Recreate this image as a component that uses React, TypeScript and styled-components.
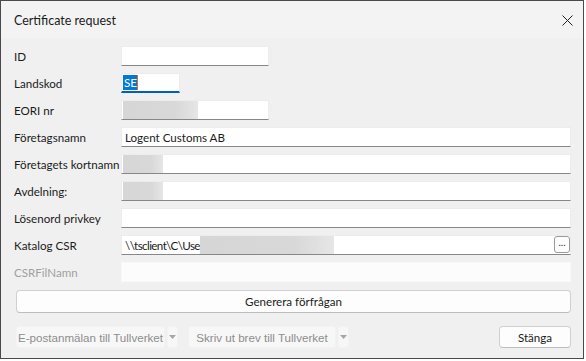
import styled, { createGlobalStyle } from 'styled-components';

const GlobalStyle = createGlobalStyle`
  html, body {
    margin: 0;
    padding: 0;
    background: #ffffff;
  }
  body {
    font-family: Lato, "Liberation Sans", sans-serif;
  }
`;

const Window = styled.div`
  box-sizing: border-box;
  width: 584px;
  height: 359px;
  border: 1px solid #4a4a4a;
  background: #f0f0f0;
  display: flex;
  flex-direction: column;
`;

const TitleBar = styled.div`
  height: 35px;
  background: #f3f3f3;
  display: flex;
  align-items: center;
  justify-content: space-between;
  padding: 2px 10px 0 13px;
  font-size: 12.5px;
  color: #1b1b1b;
`;

const CloseIcon = () => (
  <svg width="11" height="11" viewBox="0 0 11 11">
    <path d="M0.5 0.5 L10.5 10.5 M10.5 0.5 L0.5 10.5" stroke="#222" strokeWidth="1" fill="none" />
  </svg>
);

const Form = styled.div`
  display: grid;
  grid-template-columns: 107px 1fr;
  row-gap: 7px;
  padding: 8px 12px 0 13px;
  align-items: center;
`;

const Label = styled.div<{ $disabled?: boolean }>`
  font-size: 11.6px;
  color: ${(p) => (p.$disabled ? '#a0a0a0' : '#1b1b1b')};
  white-space: nowrap;
  padding-top: 1px;
`;

const Field = styled.div<{ $width?: number; $focused?: boolean; $disabled?: boolean }>`
  position: relative;
  box-sizing: border-box;
  height: 20px;
  width: ${(p) => (p.$width ? `${p.$width}px` : '100%')};
  background: ${(p) => (p.$disabled ? '#fcfcfc' : '#ffffff')};
  border: 1px solid ${(p) => (p.$disabled ? '#f8f8f8' : '#ececec')};
  border-bottom: ${(p) =>
    p.$focused ? '2px solid #005fb8' : p.$disabled ? '1px solid #f8f8f8' : '1px solid #878787'};
  display: flex;
  align-items: center;
  padding-left: 1px;
  font-size: 11.6px;
  color: #1b1b1b;
  overflow: hidden;
  white-space: nowrap;
`;

const Value = styled.span<{ $tight?: boolean }>`
  padding-left: 2px;
  letter-spacing: ${(p) => (p.$tight ? '-0.6px' : '0')};
`;

const Selected = styled.span`
  background: #0078d7;
  color: #ffffff;
  line-height: 15px;
  padding: 0 0 0 1px;
`;

const Caret = styled.span`
  display: inline-block;
  width: 1px;
  height: 15px;
  background: #e07020;
`;

const Blur = styled.div<{ $width: number }>`
  width: ${(p) => p.$width}px;
  height: 18px;
  background: linear-gradient(90deg, #d6d6d6 0%, #d8d8d8 70%, #e6e6e6 100%);
  flex-shrink: 0;
`;

const Ellipsis = styled.div`
  position: absolute;
  right: 0;
  top: 0;
  box-sizing: border-box;
  width: 16px;
  height: 17px;
  border: 1px solid #9a9a9a;
  border-radius: 3px;
  background: #fdfdfd;
  font-size: 10px;
  line-height: 11px;
  text-align: center;
  color: #333;
`;

const WideButton = styled.button`
  box-sizing: border-box;
  margin: 8px 12px 0 15px;
  height: 23px;
  border: 1px solid #d0d0d0;
  border-bottom-color: #bdbdbd;
  border-radius: 4px;
  background: #fdfdfd;
  font-family: inherit;
  font-size: 11.6px;
  color: #1b1b1b;
  padding: 0;
`;

const Footer = styled.div`
  display: flex;
  align-items: center;
  margin: 13px 12px 0 15px;
  gap: 10px;
`;

const Split = styled.div`
  display: flex;
  gap: 2px;
`;

const DisabledButton = styled.div<{ $width: number }>`
  box-sizing: border-box;
  width: ${(p) => p.$width}px;
  height: 22px;
  border-radius: 3px;
  background: #f7f7f7;
  border: 1px solid #f3f3f3;
  font-family: "Liberation Sans", Arial, sans-serif;
  font-size: 11.6px;
  color: #8d8d8d;
  display: flex;
  align-items: center;
  justify-content: center;
  white-space: nowrap;
`;

const Arrow = () => (
  <svg width="7" height="4" viewBox="0 0 7 4">
    <path d="M0 0 H7 L3.5 4 Z" fill="#a6a6a6" />
  </svg>
);

const CloseButton = styled.button`
  box-sizing: border-box;
  margin-left: auto;
  width: 72px;
  height: 22px;
  border: 1px solid #d0d0d0;
  border-bottom-color: #bdbdbd;
  border-radius: 4px;
  background: #fdfdfd;
  font-family: inherit;
  font-size: 11.6px;
  color: #1b1b1b;
  padding: 0;
`;

export default function App() {
  return (
    <>
      <GlobalStyle />
      <Window>
        <TitleBar>
          <span>Certificate request</span>
          <CloseIcon />
        </TitleBar>
        <Form>
          <Label>ID</Label>
          <Field $width={148} />

          <Label>Landskod</Label>
          <Field $width={59} $focused>
            <Selected>SE</Selected>
            <Caret />
          </Field>

          <Label>EORI nr</Label>
          <Field $width={148}>
            <Blur $width={75} />
          </Field>

          <Label>Företagsnamn</Label>
          <Field>
            <Value>Logent Customs AB</Value>
          </Field>

          <Label>Företagets kortnamn</Label>
          <Field>
            <Blur $width={40} />
          </Field>

          <Label>Avdelning:</Label>
          <Field>
            <Blur $width={40} />
          </Field>

          <Label>Lösenord privkey</Label>
          <Field />

          <Label>Katalog CSR</Label>
          <Field>
            <Value $tight>\\tsclient\C\Use</Value>
            <Blur $width={134} />
            <Ellipsis>...</Ellipsis>
          </Field>

          <Label $disabled>CSRFilNamn</Label>
          <Field $disabled />
        </Form>
        <WideButton>Generera förfrågan</WideButton>
        <Footer>
          <Split>
            <DisabledButton $width={149}>E-postanmälan till Tullverket</DisabledButton>
            <DisabledButton $width={11}>
              <Arrow />
            </DisabledButton>
          </Split>
          <Split>
            <DisabledButton $width={148}>Skriv ut brev till Tullverket</DisabledButton>
            <DisabledButton $width={11}>
              <Arrow />
            </DisabledButton>
          </Split>
          <CloseButton>Stänga</CloseButton>
        </Footer>
      </Window>
    </>
  );
}
